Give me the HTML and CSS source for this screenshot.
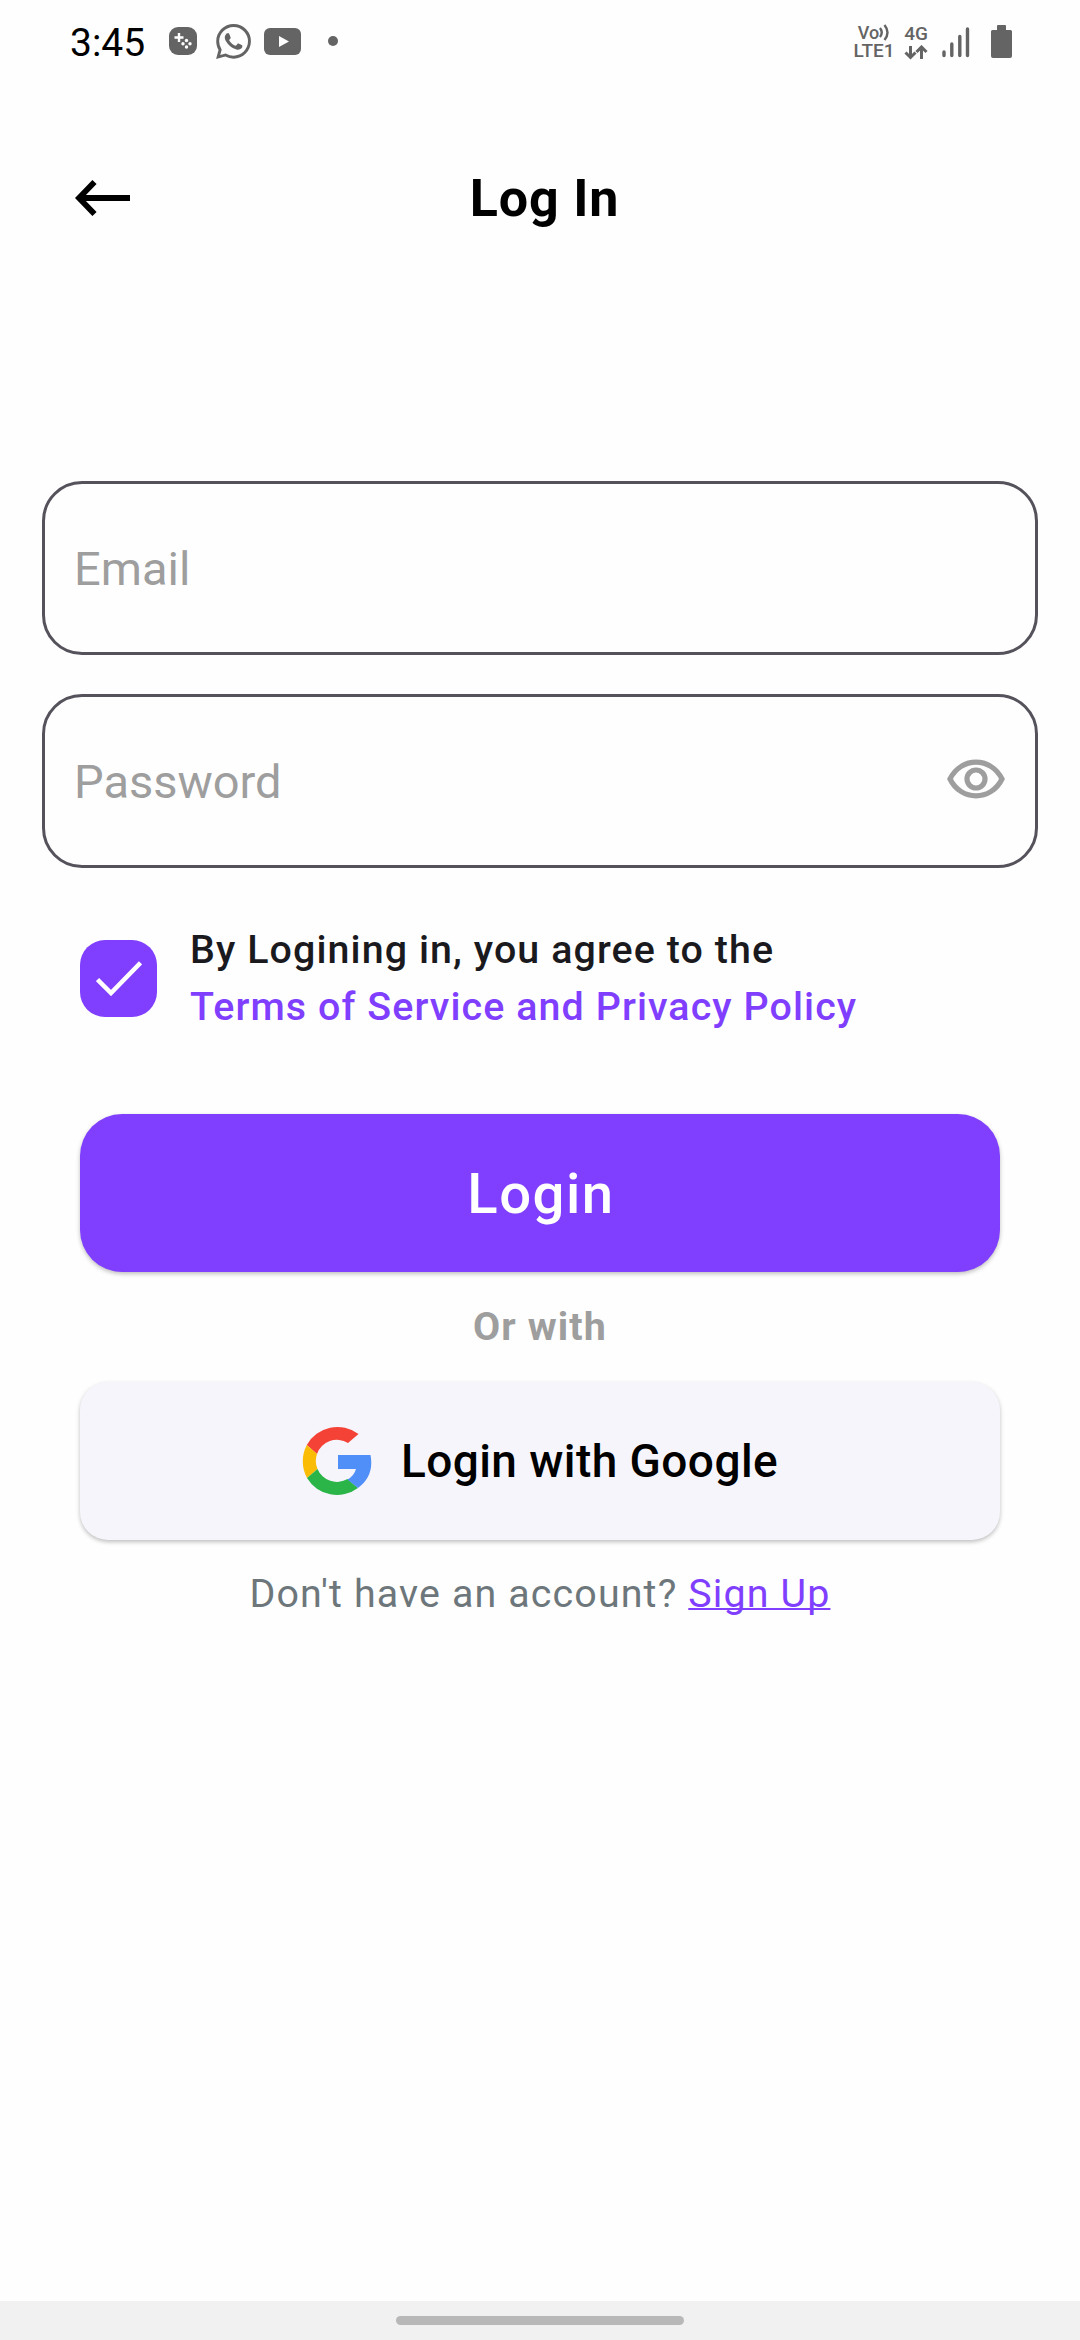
FILE: index.html
```html
<!DOCTYPE html>
<html lang="en">
<head>
<meta charset="utf-8">
<title>Log In</title>
<link rel="stylesheet" href="styles.css">
</head>
<body>
<div class="screen">
  <div class="statusbar">
    <div class="status-left">
      <span class="clock">3:45</span>
      <svg class="ic-game" width="28" height="28" viewBox="0 0 28 28"><rect width="28" height="28" rx="9" fill="#646464"/><path d="M10 6v9M5.500 10.500h9" stroke="#fff" stroke-width="2.400"/><g fill="#fff"><circle cx="17.500" cy="13.500" r="1.700"/><circle cx="17.500" cy="20" r="1.700"/><circle cx="14" cy="16.800" r="1.700"/><circle cx="21" cy="16.800" r="1.700"/></g></svg>
      <svg class="ic-wa" width="35" height="35" viewBox="0 0 24 24" fill="#646464"><path d="M17.472 14.382c-.297-.149-1.758-.867-2.030-.967-.273-.099-.471-.148-.670.150-.197.297-.767.966-.940 1.164-.173.199-.347.223-.644.075-.297-.150-1.255-.463-2.390-1.475-.883-.788-1.480-1.761-1.653-2.059-.173-.297-.018-.458.130-.606.134-.133.298-.347.446-.520.149-.174.198-.298.298-.497.099-.198.050-.371-.025-.520-.075-.149-.669-1.612-.916-2.207-.242-.579-.487-.500-.669-.510-.173-.008-.371-.010-.570-.010-.198 0-.520.074-.792.372-.272.297-1.040 1.016-1.040 2.479 0 1.462 1.065 2.875 1.213 3.074.149.198 2.096 3.200 5.077 4.487.709.306 1.262.489 1.694.625.712.227 1.360.195 1.871.118.571-.085 1.758-.719 2.006-1.413.248-.694.248-1.289.173-1.413-.074-.124-.272-.198-.570-.347m-5.421 7.403h-.004a9.870 9.870 0 01-5.031-1.378l-.361-.214-3.741.982.998-3.648-.235-.374a9.860 9.860 0 01-1.510-5.260c.001-5.450 4.436-9.884 9.888-9.884 2.640 0 5.122 1.030 6.988 2.898a9.825 9.825 0 012.893 6.994c-.003 5.450-4.437 9.884-9.885 9.884m8.413-18.297A11.815 11.815 0 0012.050 0C5.495 0 .160 5.335.157 11.892c0 2.096.547 4.142 1.588 5.945L.057 24l6.305-1.654a11.882 11.882 0 005.683 1.448h.005c6.554 0 11.890-5.335 11.893-11.893a11.821 11.821 0 00-3.480-8.413z"/></svg>
      <svg class="ic-yt" width="37" height="27" viewBox="0 0 37 27"><rect width="37" height="27" rx="6" fill="#646464"/><path d="M15 8l10 5.500-10 5.500z" fill="#fff"/></svg>
      <span class="dot"></span>
    </div>
    <div class="status-right">
      <div class="volte"><span class="vo">Vo<svg width="11" height="17" viewBox="0 0 11 17" fill="none" stroke="#646464" stroke-width="2.400"><path d="M1 4q3.500 4.500 0 9M5.500 1q6 7.500 0 15"/></svg></span><span class="lte">LTE1</span></div>
      <div class="net"><span class="g4">4G</span><svg width="24" height="15" viewBox="0 0 24 15" fill="none" stroke="#646464" stroke-width="3"><path d="M6.500 1v11M1.500 7.500l5 5 5-5M17.500 14V3M12.500 7l5-5 5 5"/></svg></div>
      <svg class="signal" width="28" height="31" viewBox="0 0 28 31" stroke="#646464" stroke-width="3.400" stroke-linecap="round"><path d="M2 25v3.500M9.800 17v11.500M17.800 9.500v19M25.500 2v26.500"/></svg>
      <svg class="battery" width="21" height="33" viewBox="0 0 21 33" fill="#646464"><path d="M6 1q0-1 1-1h7q1 0 1 1v4h4.500q1.500 0 1.500 1.500v24.500q0 2-2 2h-17q-2 0-2-2v-24.500q0-1.500 1.500-1.500H6z"/></svg>
    </div>
  </div>

  <header class="appbar">
    <svg class="back" width="56" height="36" viewBox="0 0 56 36" fill="none" stroke="#000" stroke-width="5.800"><path d="M55 18H5M19.500 2L4 18l15.500 16"/></svg>
    <h1 class="title">Log In</h1>
  </header>

  <main class="form">
    <div class="field"><span class="hint">Email</span></div>
    <div class="field">
      <span class="hint">Password</span>
      <svg class="eye" width="58" height="40" viewBox="0 0 58 40" fill="none" stroke="#9e9e9e" stroke-width="5.200"><path d="M3 20C14-2.500 44-2.500 55 20C44 42.500 14 42.500 3 20z"/><circle cx="29" cy="20" r="9"/></svg>
    </div>

    <div class="agree">
      <div class="checkbox"><svg width="46" height="35" viewBox="0 0 46 35" fill="none" stroke="#fff" stroke-width="4.500"><path d="M1.500 18.500L15 32 44.500 1.800"/></svg></div>
      <p class="terms">By Logining in, you agree to the<br><a class="policy">Terms of Service and Privacy Policy</a></p>
    </div>

    <button class="btn login">Login</button>
    <p class="or">Or with</p>
    <button class="btn google">
      <svg width="70" height="70" viewBox="0 0 70 70"><path fill="#f44336" d="M4.800 19A35 35 0 0 1 56.500 8L46 17A21 21 0 0 0 15 28z"/><path fill="#fbbc05" d="M4.800 19A35 35 0 0 0 5 52L15.500 43A21 21 0 0 1 15 28z"/><path fill="#2bb548" d="M5 52A35 35 0 0 0 56 62L45.500 53A21 21 0 0 1 15.500 43z"/><path fill="#508ff8" d="M36 29H68.500Q72.500 50 56 62L45.500 53.500Q52 50 54 43H36z"/></svg>
      <span>Login with Google</span>
    </button>
    <p class="signup">Don't have an account? <a>Sign Up</a></p>
  </main>

  <footer class="navbar"><span class="pill"></span></footer>
</div>
</body>
</html>
```
FILE: styles.css
```css
* { box-sizing: border-box; }
body { margin: 0; background: #fff; font-family: Roboto, "Noto Sans", sans-serif; }
.screen { width: 1080px; height: 2340px; display: flex; flex-direction: column; background: #fefefe; overflow: hidden; }

.statusbar { height: 84px; display: flex; justify-content: space-between; padding: 0 68px 0 70px; color: #646464; }
.status-left { display: flex; align-items: flex-start; }
.clock { font-size: 39px; line-height: 46px; margin-top: 20px; color: #000; width: 78px; }
.ic-game { margin: 27px 0 0 21px; }
.ic-wa { margin: 24px 0 0 19px; }
.ic-yt { margin: 28px 0 0 13px; }
.dot { width: 10px; height: 10px; border-radius: 50%; background: #646464; margin: 36px 0 0 27px; }
.status-right { display: flex; align-items: flex-start; }
.volte { display: flex; flex-direction: column; align-items: center; font-weight: 500; margin-top: 24px; width: 40px; }
.vo { display: flex; font-size: 18px; line-height: 18px; }
.lte { font-size: 19px; line-height: 17px; }
.net { display: flex; flex-direction: column; align-items: center; font-weight: 500; margin: 25px 0 0 9px; width: 26px; }
.g4 { font-size: 19px; line-height: 18px; }
.net svg { margin-top: 2px; }
.signal { margin: 27px 0 0 13px; }
.battery { margin: 25px 0 0 21px; }

.appbar { height: 226px; padding: 64px 75px 0; display: grid; grid-template-columns: 56px 1fr 56px; align-items: start; }
.back { margin-top: 32px; }
.title { margin: 20px 0 0 9px; text-align: center; font-size: 52px; letter-spacing: .8px; line-height: 61px; font-weight: 700; color: #000; }

.form { flex: 1; padding: 171px 42px 0; display: flex; flex-direction: column; }
.field { height: 174px; border: 3px solid #55525c; border-radius: 40px; padding: 0 30px 0 29px; display: flex; align-items: center; justify-content: space-between; }
.field + .field { margin-top: 39px; }
.hint { font-size: 47px; color: #9e9e9e; }
.eye { margin-bottom: 4px; }

.agree { display: flex; align-items: center; margin: 53px 38px 0; }
.checkbox { width: 77px; height: 77px; border-radius: 25px; background: #803efe; display: flex; align-items: center; justify-content: center; }
.terms { margin: 0 0 0 33px; font-size: 39.4px; letter-spacing: 1.08px; line-height: 57px; font-weight: 500; color: #1a1a1e; white-space: nowrap; }
.policy { color: #803efe; }

.btn { font-family: inherit; border: 0; margin: 0 38px; height: 158px; display: flex; align-items: center; justify-content: center; box-shadow: 0 2px 4px rgba(0,0,0,.25); }
.login { margin-top: 79px; padding: 2px 0 0 2px; border-radius: 42px; background: #803efe; color: #fff; font-size: 56.25px; letter-spacing: 1.5px; font-weight: 500; }
.or { margin: 32px 0 0; text-align: center; font-size: 39.4px; letter-spacing: 1.1px; line-height: 46px; font-weight: 700; color: #9e9e9e; }
.google { margin-top: 32px; border-radius: 28px; background: #f6f5fb; color: #000; font-size: 46px; letter-spacing: .43px; font-weight: 500; gap: 29px; }
.signup { margin: 31px 0 0; text-align: center; font-size: 39.4px; letter-spacing: 1.13px; line-height: 46px; color: #6d777b; white-space: pre; }
.signup a { color: #803efe; text-decoration: underline; text-decoration-skip-ink: none; text-decoration-thickness: 2px; }

.navbar { height: 39px; background: #f1f1f1; display: flex; justify-content: center; align-items: flex-start; padding-top: 15px; }
.pill { width: 288px; height: 9px; border-radius: 5px; background: #b8b8b8; }
```
